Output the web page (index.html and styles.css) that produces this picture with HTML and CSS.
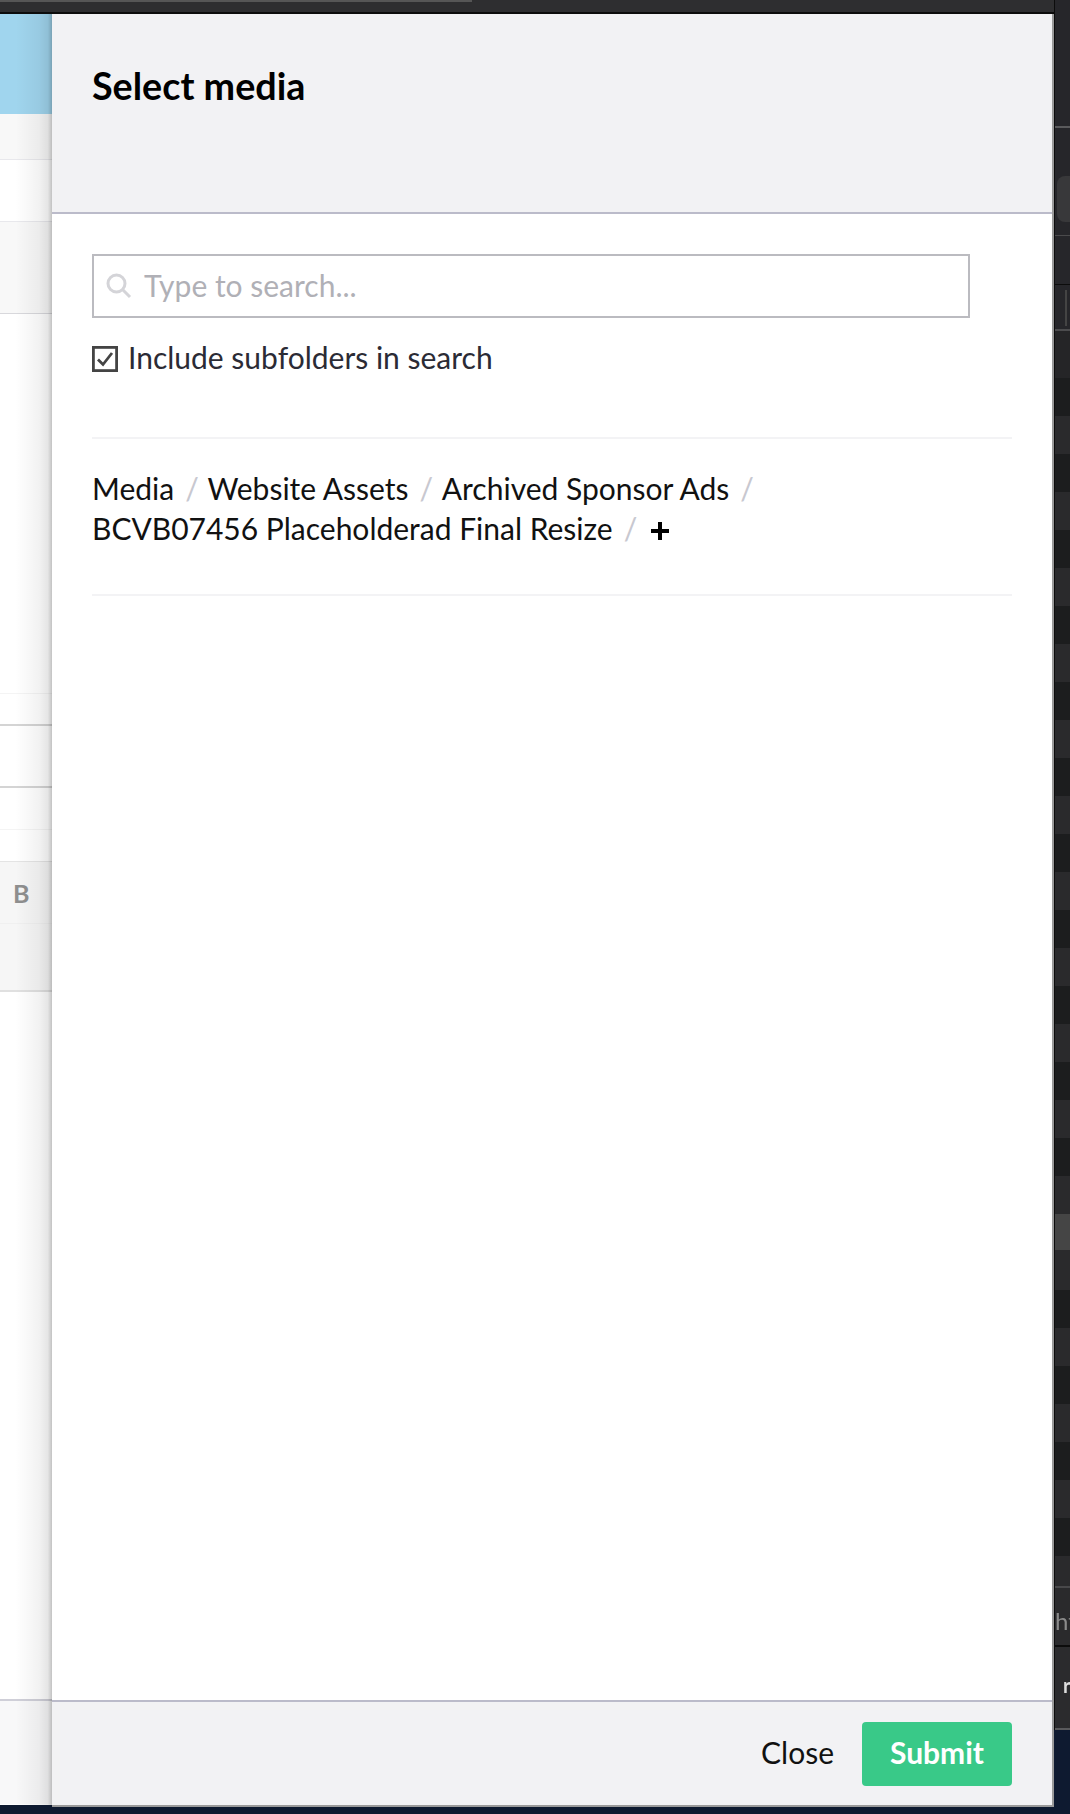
FILE: index.html
```html
<!DOCTYPE html>
<html lang="en">
<head>
<meta charset="utf-8">
<title>Select media</title>
<link rel="stylesheet" href="styles.css">
</head>
<body>
<div class="topbar"><div class="tab-edge"></div></div>
<div class="stage">
  <aside class="backdrop">
    <div class="b-row b-hero"></div>
    <div class="b-row b-a"></div>
    <div class="b-row b-b"></div>
    <div class="b-row b-c"></div>
    <div class="b-row b-d"></div>
    <div class="b-row b-e"></div>
    <div class="b-row b-f"></div>
    <div class="b-row b-g"></div>
    <div class="b-row b-h"></div>
    <div class="b-row b-i"><span class="bold-btn">B</span></div>
    <div class="b-row b-j"></div>
    <div class="b-row b-k"></div>
    <div class="b-row b-l"></div>
  </aside>
  <main class="panel">
    <header class="panel-head"><h1>Select media</h1></header>
    <section class="panel-body">
      <div class="search">
        <svg class="search-icon" viewBox="0 0 26 26" aria-hidden="true"><circle cx="10.5" cy="10.5" r="8.5"/><path d="M17 17l7 7"/></svg>
        <span class="placeholder">Type to search...</span>
      </div>
      <label class="check">
        <svg class="check-box" viewBox="0 0 26 26" aria-hidden="true"><rect x="1.4" y="1.4" width="23.2" height="23.2"/><path d="M6 13.5l5 5L20 7"/></svg>
        <span class="check-label">Include subfolders in search</span>
      </label>
      <nav class="crumbs">
        <span class="item">Media<span class="sep">/</span></span>
        <span class="item">Website Assets<span class="sep">/</span></span>
        <span class="item">Archived Sponsor Ads<span class="sep">/</span></span>
        <span class="item">BCVB07456 Placeholderad Final Resize<span class="sep">/</span></span>
        <svg class="plus" viewBox="0 0 20 20" aria-hidden="true"><path d="M10 1v18M1 10h18"/></svg>
      </nav>
    </section>
    <footer class="panel-foot">
      <span class="close">Close</span>
      <span class="submit">Submit</span>
    </footer>
  </main>
  <aside class="side">
    <div class="s-top"></div>
    <div class="s-row1"><div class="s-pill"></div></div>
    <div class="s-row2"></div>
    <div class="s-row3"><div class="s-tick"></div></div>
    <div class="s-row4"></div>
    <div class="stripes">
      <div class="st a"></div><div class="st b"></div><div class="st a"></div><div class="st b"></div>
      <div class="st a"></div><div class="st b"></div><div class="st a"></div><div class="st b"></div>
      <div class="st a"></div><div class="st b"></div><div class="st a"></div><div class="st b"></div>
      <div class="st a"></div><div class="st b"></div><div class="st a"></div><div class="st b"></div>
      <div class="st a"></div><div class="st b"></div><div class="st a"></div><div class="st b"></div>
      <div class="st a"></div><div class="st b"></div><div class="st hi"></div><div class="st b tall"></div>
      <div class="st a"></div><div class="st b"></div><div class="st a"></div><div class="st b"></div>
      <div class="st a"></div><div class="st b"></div><div class="st a"></div><div class="st b short"></div>
    </div>
    <div class="s-url">ht</div>
    <div class="s-last"><span class="s-frag">r</span></div>
  </aside>
</div>
</body>
</html>
```
FILE: styles.css
```css
* { box-sizing: border-box; }
html, body { margin: 0; padding: 0; }
body {
  width: 1070px;
  height: 1814px;
  overflow: hidden;
  background: #0e1a30;
  font-family: Lato, "Open Sans", sans-serif;
  color: #111;
}
.topbar {
  height: 14px;
  background: #2e2e30;
  border-bottom: 2px solid #0c0c0c;
  filter: blur(.4px);
}
.tab-edge { width: 472px; height: 2px; background: #565656; }
.stage { display: flex; align-items: flex-start; height: 1800px; filter: blur(.4px); }

.backdrop { position: relative; width: 52px; height: 1791px; flex: none; background: #fff; }
.backdrop::after {
  content: "";
  position: absolute;
  inset: 0;
  background: linear-gradient(to right, rgba(0,0,0,0) 30%, rgba(0,0,0,.05) 75%, rgba(0,0,0,.1) 92%, rgba(0,0,0,.24) 100%);
}
.b-row { border-bottom: 1px solid #e8e8ec; }
.b-hero { height: 100px; background: #a0d5ee; border: 0; }
.b-a { height: 46px; background: #f8f8f8; }
.b-b { height: 62px; }
.b-c { height: 92px; background: #f8f8f8; border-bottom-color: #d8d8dc; }
.b-d { height: 380px; border-bottom-color: #f4f4f4; }
.b-e { height: 32px; border-bottom: 2px solid #d4d4d4; }
.b-f { height: 62px; border-bottom: 2px solid #d4d4d4; }
.b-g { height: 42px; border-bottom-color: #f4f4f4; }
.b-h { height: 32px; border-bottom-color: #e4e4e4; }
.b-i { height: 62px; background: #f6f6f6; border-bottom-color: #f0f0f0; display: flex; align-items: center; }
.bold-btn { margin-left: 13px; font-size: 25px; font-weight: 700; color: #8f8f8f; }
.b-j { height: 68px; background: #f6f6f6; border-bottom: 2px solid #e0e0e0; }
.b-k { height: 709px; border-bottom: 2px solid #cfcfd8; }
.b-l { height: 103px; background: #f8f8f9; border: 0; }

.panel {
  width: 1002px;
  height: 1793px;
  flex: none;
  display: flex;
  flex-direction: column;
  background: #fff;
  border-right: 2px solid #9a9a9a;
  border-bottom: 2px solid #9a9a9a;
}
.panel-head {
  height: 200px;
  flex: none;
  padding: 49px 40px 0;
  background: #f2f2f4;
  border-bottom: 2px solid #bbbbca;
}
.panel-head h1 { margin: 0; font-size: 37.7px; line-height: 46px; font-weight: 700; color: #000; }
.panel-body { flex: 1; padding: 40px 40px 0; }
.search {
  display: flex;
  align-items: center;
  width: 878px;
  height: 64px;
  padding-left: 12px;
  border: 2px solid #bbbbc0;
}
.search-icon { width: 26px; height: 26px; margin-right: 12px; fill: none; stroke: #d4d4d8; stroke-width: 3; }
.placeholder { font-size: 30px; color: #b0b0b6; margin-bottom: 2px; }
.check { display: flex; align-items: center; gap: 10px; margin-top: 24px; height: 34px; font-size: 30px; color: #2b2b35; }
.check-label { margin-bottom: 5px; }
.check-box { width: 26px; height: 26px; flex: none; fill: none; stroke: #444; }
.check-box rect { stroke-width: 2.8; }
.check-box path { stroke-width: 2.8; }
.crumbs {
  margin-top: 61px;
  width: 920px;
  padding: 29px 0 46px;
  border-top: 2px solid #f3f3f5;
  border-bottom: 2px solid #f3f3f5;
  font-size: 30px;
  line-height: 40px;
  color: #111;
}
.item { display: inline-block; margin-right: -12px; }
.sep { margin: 0 13px 0 11px; color: #c8c8d0; }
.plus { width: 20px; height: 20px; margin-left: 4px; vertical-align: -1px; fill: none; stroke: #000; stroke-width: 4; }
.panel-foot {
  height: 105px;
  flex: none;
  display: flex;
  justify-content: flex-end;
  align-items: center;
  gap: 28px;
  padding: 0 40px 0 0;
  background: #f2f2f4;
  border-top: 2px solid #bbbbca;
  font-size: 30px;
}
.close { color: #111; margin-bottom: 3px; }
.submit {
  display: flex;
  align-items: center;
  justify-content: center;
  width: 150px;
  height: 64px;
  padding-bottom: 3px;
  border-radius: 4px;
  background: #39c988;
  color: #fff;
  font-weight: 700;
}

.side { width: 16px; flex: none; margin-top: -14px; background: #26262a; border-left: 1px solid #0c0c0c; position: relative; z-index: 1; }
.s-top { height: 128px; border-bottom: 2px solid #5a5a5c; }
.s-row1 { height: 108px; padding-top: 48px; border-bottom: 1px solid #4a4a4c; }
.s-pill { height: 46px; margin-left: 2px; border-radius: 8px 0 0 8px; background: #38383a; }
.s-row2 { height: 49px; border-bottom: 1px solid #0c0c0c; }
.s-row3 { height: 46px; padding: 5px 0 0 10px; border-bottom: 2px solid #4c4c4e; }
.s-tick { width: 2px; height: 36px; background: #444; }
.s-row4 { height: 47px; background: #252527; }
.stripes { display: flex; flex-direction: column; }
.st { height: 38px; }
.st.a { background: #1c1d1e; }
.st.b { background: #2a2a2c; }
.st.hi { height: 36px; background: #454545; }
.st.tall { height: 40px; }
.st.short { height: 30px; }
.s-url { height: 61px; overflow: hidden; border-top: 2px solid #48484a; border-bottom: 2px solid #0c0c0c; font-size: 24px; line-height: 66px; color: #8a8a8a; background: #2a2a2c; }
.s-last { height: 83px; padding-top: 30px; background: #2b2b2d; border-bottom: 2px solid #5a5a5c; color: #ddd; font-size: 20px; font-weight: 700; line-height: 16px; overflow: hidden; }
.s-frag { margin-left: 8px; }
```
